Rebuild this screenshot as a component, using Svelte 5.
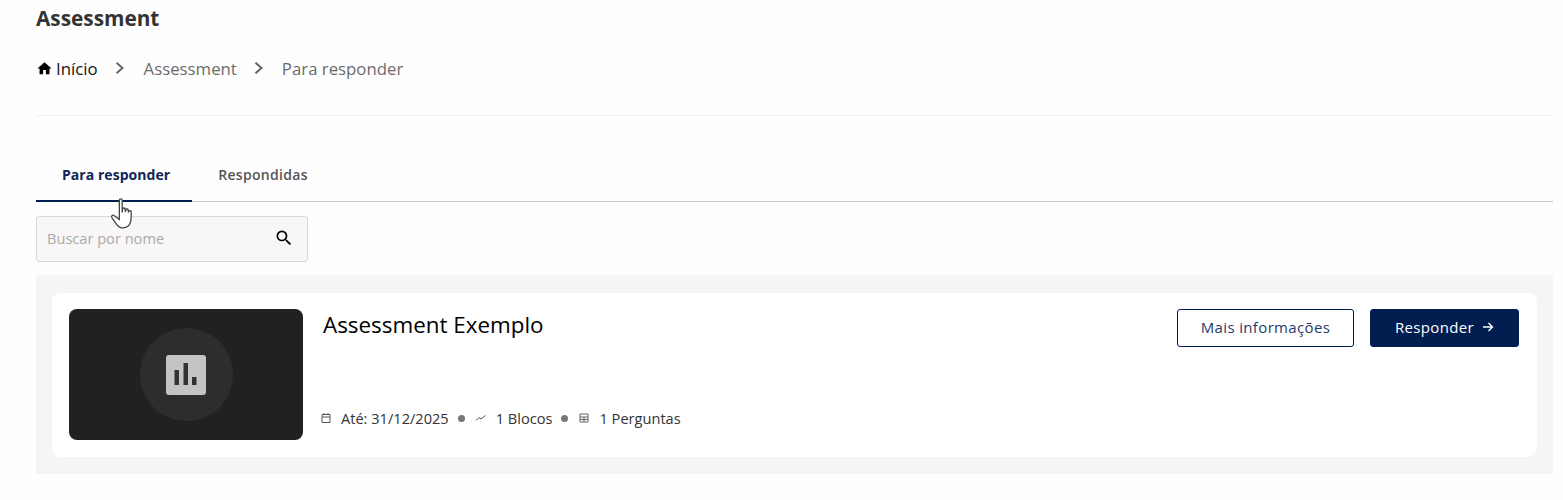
<script>
  const crumbs = ['Assessment', 'Para responder'];
</script>

<main class="page">
  <h1>Assessment</h1>

  <nav class="crumbs">
    <span class="home">
      <svg viewBox="0 0 24 24" width="17" height="17"><path d="M10 20v-6h4v6h5v-8h3L12 3 2 12h3v8z" fill="#000" /></svg>
      Início
    </span>
    {#each crumbs as c}
      <svg class="chev" viewBox="0 0 12 12" width="12" height="14"><path d="M2.500 .8 8.500 6l-6 5.200" fill="none" stroke="#666" stroke-width="2" /></svg>
      <span class="crumb">{c}</span>
    {/each}
  </nav>

  <hr />

  <div class="tabs">
    <div class="tab tab--on">Para responder</div>
    <div class="tab">Respondidas</div>
    <svg class="cursor" viewBox="0 0 24 28" width="31" height="36">
      <path d="M8 2.500c0-1.400 2.200-1.400 2.200 0V12l.3-2.600c.2-1.200 2-1.100 2 .2l.2 2 .3-1.500c.3-1.100 1.900-1 1.900.2l.1 1.800.4-1c.4-.9 1.800-.7 1.800.4 0 3.500.2 6.500-.8 8.800-.9 2.200-2.700 3.700-5.400 3.700-2.300 0-3.800-.9-5-2.600L2.200 16c-.8-1.200.7-2.500 1.900-1.500L8 17.500z" fill="#fff" stroke="#444" stroke-width="1" />
    </svg>
  </div>

  <div class="search">
    <span>Buscar por nome</span>
    <svg viewBox="0 0 24 24" width="20" height="20"><path d="M15.500 14h-.79l-.28-.27A6.470 6.470 0 0 0 16 9.500 6.500 6.500 0 1 0 9.500 16c1.610 0 3.090-.59 4.230-1.570l.27.28v.79l5 4.990L20.490 19zm-6 0C7.010 14 5 11.990 5 9.500S7.010 5 9.500 5 14 7.010 14 9.500 11.990 14 9.500 14" fill="#000" /></svg>
  </div>

  <section class="list">
    <article class="card">
      <div class="thumb">
        <div class="disc">
          <svg viewBox="0 0 40 40" width="40" height="40">
            <rect width="40" height="40" rx="3" fill="#c4c4c4" />
            <rect x="8.500" y="15" width="4.500" height="15" fill="#333" />
            <rect x="17.500" y="8" width="4.500" height="22" fill="#333" />
            <rect x="26" y="22" width="4.500" height="8" fill="#333" />
          </svg>
        </div>
      </div>

      <div class="body">
        <h2>Assessment Exemplo</h2>
        <div class="meta">
          <svg viewBox="0 0 12 12" width="12" height="12"><path d="M2 2.500h8v8H2zM2 5h8M4 1v2M8 1v2" fill="none" stroke="#555" /></svg>
          <span class="txt">Até: 31/12/2025</span>
          <span class="dot"></span>
          <svg viewBox="0 0 12 12" width="12" height="12"><path d="M1 8.500 4 5.500l2 1.500 4.500-3.500" fill="none" stroke="#555" /></svg>
          <span class="txt">1 Blocos</span>
          <span class="dot"></span>
          <svg viewBox="0 0 12 12" width="12" height="12"><path d="M2 2h8v8H2zM2 5h8M2 7.500h8M6 5v5" fill="none" stroke="#666" /></svg>
          <span class="txt">1 Perguntas</span>
        </div>
      </div>

      <div class="actions">
        <button class="btn btn--line">Mais informações</button>
        <button class="btn btn--fill">
          Responder
          <svg viewBox="0 0 12 12" width="12" height="12"><path d="M1 6h9.500M6.500 2l4 4-4 4" fill="none" stroke="#fff" stroke-width="1.400" /></svg>
        </button>
      </div>
    </article>
  </section>
</main>

<style>
  :global(body) {
    background: #fefefe;
    font-family: "Open Sans", sans-serif;
  }

  .page {
    height: 500px;
    box-sizing: border-box;
    padding: 4px 10px 0 36px;
    overflow: hidden;
  }

  h1 {
    margin: 0;
    font-size: 20.800px;
    line-height: 28px;
    font-weight: 700;
    color: #333;
  }

  .crumbs {
    display: flex;
    align-items: center;
    margin-top: 22px;
    height: 28px;
    font-size: 16.800px;
    color: #6b6b6b;
  }

  .home {
    display: flex;
    align-items: center;
    gap: 3px;
    color: #111;
  }

  .chev {
    margin: 0 18px 0 16px;
  }

  .chev:last-of-type {
    margin-right: 17px;
  }

  hr {
    border: 0;
    border-top: 1px solid #f1f1f1;
    margin: 33px 0 0;
  }

  .tabs {
    position: relative;
    display: flex;
    margin-top: 36px;
    height: 49px;
    border-bottom: 1px solid #c4c4c4;
  }

  .tab {
    padding: 0 22px 0 26px;
    line-height: 46px;
    font-size: 14px;
    font-weight: 600;
    letter-spacing: 0.3px;
    color: #555;
  }

  .tab--on {
    color: #0f2557;
    font-weight: 700;
    letter-spacing: 0.05px;
    box-shadow: inset 0 -2px #001e50;
    margin-bottom: -1px;
    height: 50px;
    box-sizing: border-box;
  }

  .cursor {
    position: absolute;
    left: 73px;
    top: 45px;
  }

  .search {
    display: flex;
    align-items: center;
    justify-content: space-between;
    box-sizing: border-box;
    width: 272px;
    height: 46px;
    margin-top: 14px;
    padding: 0 13px 2px 10px;
    background: #f8f6f7;
    border: 1px solid #d9d9d9;
    border-radius: 3px;
    font-size: 14.600px;
    color: #aaa;
  }

  .list {
    margin-top: 13px;
    padding: 18px 16px 17px;
    background: #f5f5f5;
  }

  .card {
    display: flex;
    height: 164px;
    box-sizing: border-box;
    padding: 16px 18px 17px 17px;
    background: #fff;
    border-radius: 8px;
  }

  .thumb {
    display: flex;
    align-items: center;
    justify-content: center;
    width: 234px;
    height: 131px;
    flex: none;
    background: #212121;
    border-radius: 8px;
  }

  .disc {
    display: flex;
    align-items: center;
    justify-content: center;
    width: 93px;
    height: 93px;
    border-radius: 50%;
    background: #2d2d2d;
  }

  .body {
    display: flex;
    flex-direction: column;
    justify-content: space-between;
    flex: 1;
    margin-left: 20px;
  }

  h2 {
    margin: 0;
    font-size: 22.400px;
    line-height: 32px;
    font-weight: 400;
    color: #000;
  }

  .meta {
    display: flex;
    align-items: center;
    height: 22px;
    margin: 0 0 11px -3px;
    font-size: 14.600px;
    color: #333;
  }

  .meta svg {
    margin-right: 9px;
  }

  .dot {
    width: 7px;
    height: 7px;
    margin: 0 10px 0 9px;
    border-radius: 50%;
    background: #777;
  }

  .actions {
    display: flex;
    gap: 16px;
    align-items: flex-start;
  }

  .btn {
    display: flex;
    align-items: center;
    justify-content: center;
    gap: 8px;
    height: 38px;
    font: 15px "Open Sans", sans-serif;
    letter-spacing: 0.35px;
    border-radius: 3px;
    padding: 0 0 2px;
  }

  .btn--line {
    width: 177px;
    background: #fff;
    color: #1f3a6b;
    border: 1px solid #001e50;
  }

  .btn--fill {
    width: 149px;
    background: #001e50;
    color: #fff;
    border: 1px solid #001e50;
  }
</style>
